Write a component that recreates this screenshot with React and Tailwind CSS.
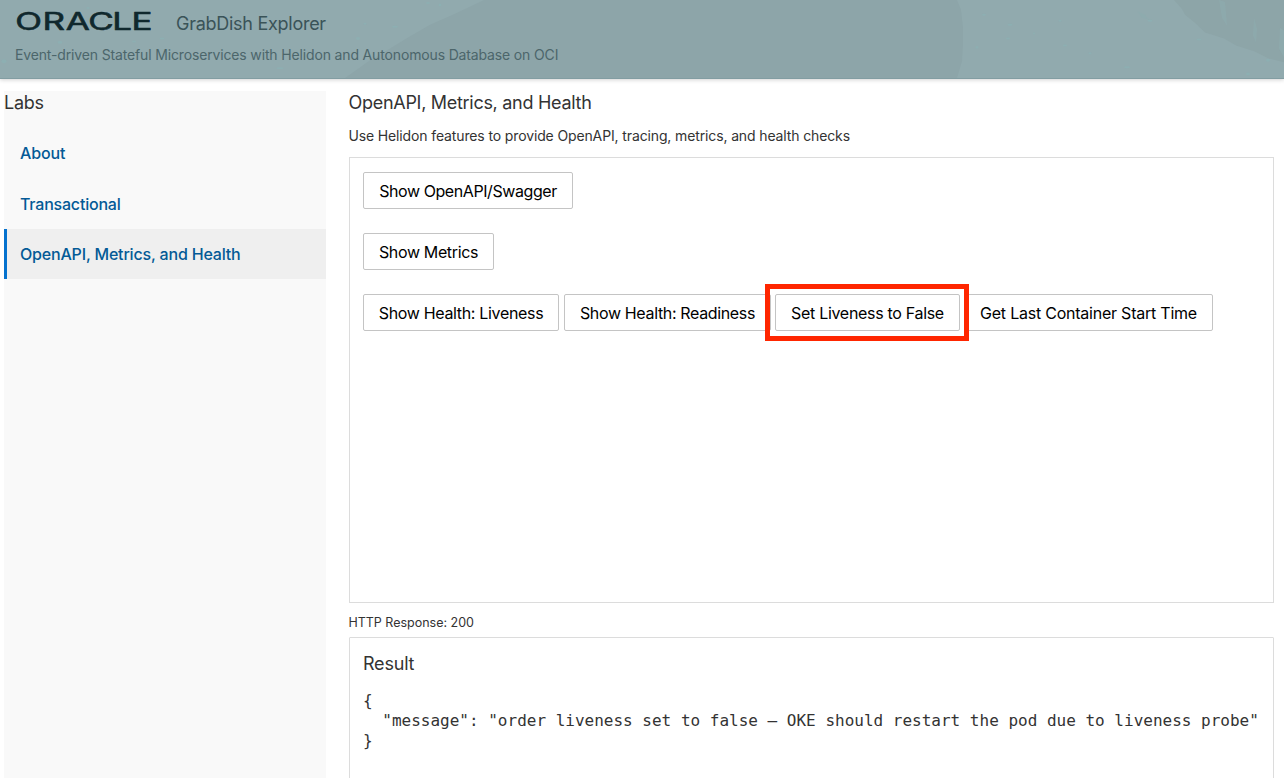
const labs = [
  { name: "About", spacing: "tracking-[-0.12px]" },
  { name: "Transactional", spacing: "tracking-[-0.2px]" },
  { name: "OpenAPI, Metrics, and Health", spacing: "tracking-[-0.18px]", active: true },
];

const flecks = [
  [428, 3, 4, 2], [440, 5, 3, 3], [395, 27, 6, 2], [358, 39, 4, 3], [365, 24, 3, 2],
  [984, 15, 4, 2], [1010, 25, 5, 2], [1008, 39, 4, 2], [1034, 34, 2, 2], [977, 48, 3, 3],
  [1065, 46, 4, 2], [1127, 68, 6, 2], [1090, 54, 3, 2], [1199, 40, 5, 2], [1268, 61, 4, 3],
  [1248, 75, 4, 3], [1150, 21, 5, 2], [280, 69, 7, 2], [162, 39, 5, 2], [134, 42, 4, 2],
  [60, 43, 5, 3], [4, 62, 5, 4], [88, 8, 3, 2], [1060, 21, 3, 2],
];

function HeaderTexture() {
  return (
    <svg className="absolute inset-0 h-full w-full" viewBox="0 0 1284 79" preserveAspectRatio="none" aria-hidden="true">
      <path d="M484 0 L455 14 L430 25 L408 38 L390 49 L370 61 L345 79 H957 L962 62 L963 45 L963 28 L961 10 L957 0 Z" fill="#8da5a9" />
      <path d="M1174 0 L1182 9 L1185 15 L1196 24 L1205 33 L1224 39 L1236 46 L1254 52 L1268 59 L1284 63 V0 Z" fill="#8da5a8" />
      <g fill="#8eacaf" opacity="0.7">
        <path d="M1137 11 L1145 15 L1149 20 L1142 18 Z" />
        <path d="M1219 0 L1225 2 L1227 26 L1222 18 Z M1254 18 L1257 29 L1256 43 L1253 36 Z M1280 28 L1284 31 V58 L1279 49 Z" />
      </g>
      {flecks.map(([x, y, w, h], i) => (
        <ellipse key={i} cx={x} cy={y} rx={w / 2} ry={h / 2} fill="#8cb0b3" opacity="0.7" />
      ))}
    </svg>
  );
}

function Button({ width, spacing, children }) {
  return (
    <button className={`h-[37px] shrink-0 whitespace-nowrap rounded-[2px] border border-[#c4c4c4] bg-white pt-px text-center text-[16px] leading-[35px] text-black ${width} ${spacing}`}>
      {children}
    </button>
  );
}

export default function App() {
  return (
    <div className="flex h-[778px] w-[1284px] flex-col overflow-hidden bg-white font-['Inter',sans-serif] text-[#333333]">
      <header className="relative h-[79px] shrink-0 border-b border-[#829da2] bg-[#91aaae] shadow-[0_1px_4px_rgba(0,0,0,0.18)]">
        <HeaderTexture />
        <div className="relative flex h-[46px] items-center pl-4">
          <svg className="h-[46px] w-[160px] shrink-0" viewBox="0 0 160 46" role="img" aria-label="ORACLE">
            <text x="-0.5 18.4 34.6 50.2 66.9 80.2" y="29.6" transform="scale(1.44 1)" fontFamily="Inter, sans-serif" fontSize="24.3" fontWeight="400" fill="#10282d" stroke="#10282d" strokeWidth="0.6" strokeLinejoin="round">ORACLE</text>
          </svg>
          <h1 className="pt-0.5 text-[18px] font-normal leading-[46px] tracking-[-0.27px] text-[#3a5358]">GrabDish Explorer</h1>
        </div>
        <p className="relative pl-[15px] text-[14px] leading-[18px] tracking-[-0.15px] text-[#4c666b]">
          <span>Event-driven Stateful Microservices with Helidon and Autonomous Database on OCI</span>
        </p>
      </header>

      <div className="flex min-h-0 flex-1 pl-1 pr-[10px] pt-3">
        <aside className="w-[322px] shrink-0 bg-[#f9f9f9]">
          <h2 className="h-[37px] text-[18px] font-normal leading-[23px] tracking-[-0.3px]"><span>Labs</span></h2>
          <nav className="flex flex-col text-[16px] font-medium leading-[50px] text-[#045a96]">
            {labs.map((lab) => (
              <a key={lab.name} className={`whitespace-nowrap ${lab.spacing} ${lab.active ? "h-[50px] border-l-[3px] border-[#0572ce] bg-[#efefef] pl-[13px]" : "h-[50.5px] pl-4"}`}>
                {lab.name}
              </a>
            ))}
          </nav>
        </aside>

        <main className="ml-[23px] flex min-w-0 flex-1 flex-col">
          <h2 className="-ml-[0.5px] h-[32px] shrink-0 text-[18px] font-normal leading-[23px] tracking-[-0.29px]"><span>OpenAPI, Metrics, and Health</span></h2>
          <p className="-ml-[0.6px] h-[34px] shrink-0 text-[14px] leading-[26px] tracking-[-0.13px]"><span>Use Helidon features to provide OpenAPI, tracing, metrics, and health checks</span></p>
          <section className="flex h-[446px] shrink-0 flex-col gap-6 border border-[#dcdcdc] pl-[13px] pt-[14px]">
            <div className="flex"><Button width="w-[210px]" spacing="tracking-[-0.42px]">Show OpenAPI/Swagger</Button></div>
            <div className="flex"><Button width="w-[131px]" spacing="tracking-[-0.35px]">Show Metrics</Button></div>
            <div className="flex">
              <Button width="w-[196px]" spacing="tracking-[-0.33px]">Show Health: Liveness</Button>
              <Button width="ml-[5px] w-[207px]" spacing="tracking-[-0.35px]">Show Health: Readiness</Button>
              <div className="relative ml-1 flex">
                <Button width="w-[185px]" spacing="tracking-[-0.31px]">Set Liveness to False</Button>
                <div className="pointer-events-none absolute -left-[10px] -top-[10px] z-10 h-[57px] w-[204px] border-[5px] border-[#ff2600]" />
              </div>
              <Button width="ml-1 w-[249px]" spacing="tracking-[-0.23px]">Get Last Container Start Time</Button>
            </div>
          </section>
          <p className="-ml-[0.6px] h-[34px] shrink-0 text-[12.5px] leading-[39px]"><span>HTTP Response: 200</span></p>
          <section className="h-[160px] shrink-0 rounded-t-[1px] border border-[#dcdcdc] pl-[13px] pt-[14px]">
            <h2 className="text-[18px] font-normal leading-[23px] tracking-[-0.2px]"><span>Result</span></h2>
            <pre className="mt-4 font-['DejaVu_Sans_Mono',monospace] text-[16px] leading-5">{`{
  "message": "order liveness set to false – OKE should restart the pod due to liveness probe"
}`}</pre>
          </section>
        </main>
      </div>
    </div>
  );
}
